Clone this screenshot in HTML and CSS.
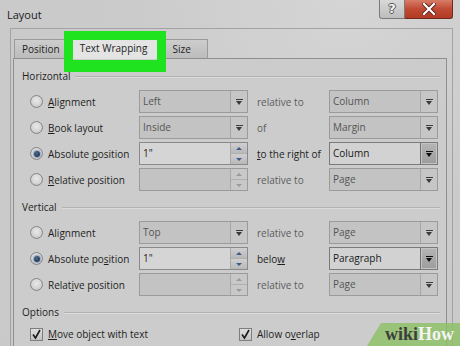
FILE: index.html
```html
<!DOCTYPE html>
<html>
<head>
<meta charset="utf-8">
<title>Layout</title>
<link rel="stylesheet" href="styles.css">
</head>
<body>
<div class="win">
  <div class="titlebar">
    <span class="title">Layout</span>
    <div class="caption">
      <div class="btn-help">?</div>
      <div class="btn-close">
        <svg width="14" height="12" viewBox="0 0 14 12"><path d="M2 1 L12 11 M12 1 L2 11" stroke="#5a2018" stroke-width="4" stroke-linecap="square"/><path d="M2 1 L12 11 M12 1 L2 11" stroke="#ffffff" stroke-width="2.2" stroke-linecap="square"/></svg>
      </div>
    </div>
  </div>

  <div class="frame">
    <div class="tabs">
      <div class="tab">Position</div>
      <div class="tab active"><span>Text Wrapping</span><div class="hl"></div></div>
      <div class="tab">Size</div>
    </div>

    <div class="panel">
      <div class="ghead">Horizontal</div>
      <div class="rows">
        <label class="opt"><span class="radio"></span><span><u>A</u>lignment</span></label>
        <div class="combo dis"><span class="val">Left</span><span class="dd"><i class="arr"></i></span></div>
        <span class="lbl dis">relative to</span>
        <div class="combo dis"><span class="val">Column</span><span class="dd"><i class="arr"></i></span></div>

        <label class="opt"><span class="radio"></span><span><u>B</u>ook layout</span></label>
        <div class="combo dis"><span class="val">Inside</span><span class="dd"><i class="arr"></i></span></div>
        <span class="lbl dis">of</span>
        <div class="combo dis"><span class="val">Margin</span><span class="dd"><i class="arr"></i></span></div>

        <label class="opt"><span class="radio on"></span><span>Absolute <u>p</u>osition</span></label>
        <div class="spin en"><span class="val">1"</span><span class="sb"><span class="up"><i class="ua"></i></span><span class="dn"><i class="da"></i></span></span></div>
        <span class="lbl"><u>t</u>o the right of</span>
        <div class="combo en"><span class="val">Column</span><span class="dd"><i class="arr"></i></span></div>

        <label class="opt"><span class="radio"></span><span><u>R</u>elative position</span></label>
        <div class="spin dis"><span class="val"></span><span class="sb"><span class="up"><i class="ua"></i></span><span class="dn"><i class="da"></i></span></span></div>
        <span class="lbl dis">relative to</span>
        <div class="combo dis"><span class="val">Page</span><span class="dd"><i class="arr"></i></span></div>
      </div>

      <div class="ghead gap">Vertical</div>
      <div class="rows">
        <label class="opt"><span class="radio"></span><span>Ali<u>g</u>nment</span></label>
        <div class="combo dis"><span class="val">Top</span><span class="dd"><i class="arr"></i></span></div>
        <span class="lbl dis">relative to</span>
        <div class="combo dis"><span class="val">Page</span><span class="dd"><i class="arr"></i></span></div>

        <label class="opt"><span class="radio on"></span><span>Absolute po<u>s</u>ition</span></label>
        <div class="spin en"><span class="val">1"</span><span class="sb"><span class="up"><i class="ua"></i></span><span class="dn"><i class="da"></i></span></span></div>
        <span class="lbl">belo<u>w</u></span>
        <div class="combo en"><span class="val">Paragraph</span><span class="dd"><i class="arr"></i></span></div>

        <label class="opt"><span class="radio"></span><span>Relat<u>i</u>ve position</span></label>
        <div class="spin dis"><span class="val"></span><span class="sb"><span class="up"><i class="ua"></i></span><span class="dn"><i class="da"></i></span></span></div>
        <span class="lbl dis">relative to</span>
        <div class="combo dis"><span class="val">Page</span><span class="dd"><i class="arr"></i></span></div>
      </div>

      <div class="ghead gap">Options</div>
      <div class="checks">
        <label class="opt"><span class="check"><svg width="11" height="11" viewBox="0 0 11 11"><path d="M2 5.5 L4.5 9 L9 1" fill="none" stroke="#1a1a1a" stroke-width="1.6"/></svg></span><span><u>M</u>ove object with text</span></label>
        <label class="opt"><span class="check"><svg width="11" height="11" viewBox="0 0 11 11"><path d="M2 5.5 L4.5 9 L9 1" fill="none" stroke="#1a1a1a" stroke-width="1.6"/></svg></span><span>Allow o<u>v</u>erlap</span></label>
      </div>
    </div>
  </div>

  <div class="wikihow"><span class="wk">wiki</span><span class="hw">How</span></div>
</div>
</body>
</html>
```

FILE: styles.css
```css
html, body {
  margin: 0;
  padding: 0;
}
body {
  width: 460px;
  height: 346px;
  overflow: hidden;
  font-family: "Open Sans", "Noto Sans", sans-serif;
  font-size: 10px;
  color: #1e1e1e;
}
.win {
  position: relative;
  width: 460px;
  height: 346px;
  overflow: hidden;
  background: radial-gradient(ellipse at 75% 0%, #d5d5d5 0%, #cbcbcb 45%, #c9c9c9 100%);
}
u {
  text-decoration: underline;
  text-underline-offset: 1px;
}

/* title bar */
.titlebar {
  height: 28px;
  display: flex;
  justify-content: space-between;
  align-items: flex-start;
  padding: 0 7px 0 7px;
  box-sizing: border-box;
}
.title {
  font-size: 11px;
  line-height: 14px;
  margin-top: 8px;
  color: #1a1a1a;
}
.caption {
  display: flex;
  height: 19px;
}
.btn-help {
  width: 24px;
  height: 18px;
  border: 1px solid #7a7a7a;
  border-top: none;
  border-radius: 0 0 0 3px;
  background: linear-gradient(#d9d9d9, #bdbdbd);
  color: #f4f4f4;
  font: bold 13px/18px "DejaVu Sans", sans-serif;
  text-align: center;
  text-shadow: 1px 0 0 #555, -1px 0 0 #555, 0 1px 0 #555, 0 -1px 0 #555;
}
.btn-close {
  width: 47px;
  height: 18px;
  border: 1px solid #6d2a1f;
  border-top: none;
  border-left: none;
  border-radius: 0 0 3px 0;
  background: linear-gradient(#d87d68, #c04a33 50%, #b23a24);
  display: flex;
  align-items: center;
  justify-content: center;
}

/* frame with tabs */
.frame {
  margin-left: 10px;
  width: 443px;
  height: 318px;
  box-sizing: border-box;
  border: 1px solid #a3a3a3;
  border-bottom: none;
  padding: 0 5px 0 2px;
}
.tabs {
  height: 29px;
  display: flex;
  align-items: flex-end;
  padding-left: 1px;
}
.tab {
  height: 19px;
  box-sizing: border-box;
  border: 1px solid #9a9a9a;
  border-bottom: none;
  background: linear-gradient(#cdcdcd, #bcbcbc);
  line-height: 18px;
  color: #1e1e1e;
  padding: 0 7px;
}
.tab:last-child {
  padding: 0 14px 0 12px;
  width: 48px;
}
.tab.active {
  position: relative;
  height: 22px;
  width: 92px;
  padding: 0;
  text-align: center;
  line-height: 21px;
  background: #e4e4e4;
  margin-bottom: -1px;
  z-index: 1;
}
.hl {
  position: absolute;
  left: -5px;
  top: -7px;
  width: 102px;
  height: 41px;
  box-sizing: border-box;
  border: 9px solid #1fe31f;
  border-bottom-width: 12px;
}

.panel {
  height: 289px;
  box-sizing: border-box;
  border: 1px solid #8f8f8f;
  border-bottom: none;
  background: #cccccc;
  padding: 9px 6px 0 8px;
}
.ghead {
  height: 16px;
  line-height: 16px;
  display: flex;
  align-items: center;
  gap: 5px;
  color: #1e1e1e;
}
.ghead::after {
  content: "";
  flex: 1;
  height: 0;
  border-top: 1px solid #b2b2b2;
  box-shadow: 0 1px 0 #dcdcdc;
}
.ghead.gap {
  margin-top: 8px;
}
.rows {
  margin: 6px 0 0 8px;
  display: grid;
  grid-template-columns: 109px 109px 81px 109px;
  grid-auto-rows: 23px;
  row-gap: 3px;
}
.rows + .ghead {
  margin-top: 8px;
}
.opt {
  display: flex;
  align-items: center;
  gap: 5px;
  white-space: nowrap;
}
.radio {
  width: 13px;
  height: 13px;
  box-sizing: border-box;
  border-radius: 50%;
  border: 1px solid #858585;
  background: radial-gradient(circle at 50% 40%, #e9e9e9 0%, #d4d4d4 55%, #b9b9b9 100%);
  display: flex;
  align-items: center;
  justify-content: center;
}
.radio.on::after {
  content: "";
  width: 6px;
  height: 6px;
  border-radius: 50%;
  background: radial-gradient(circle at 40% 35%, #4c6a90, #14243a);
  box-shadow: 0 0 1px 1px #8fa6c2;
}
.lbl {
  display: flex;
  align-items: center;
  padding-left: 9px;
  white-space: nowrap;
  color: #1e1e1e;
}
.lbl.dis {
  color: #5c5c5c;
}

/* combo boxes */
.combo, .spin {
  display: flex;
  box-sizing: border-box;
  border: 1px solid #9b9b9b;
  background: #c3c3c3;
}
.val {
  flex: 1;
  padding-left: 3px;
  line-height: 21px;
  color: #555;
  white-space: nowrap;
}
.dd {
  width: 16px;
  border-left: 1px solid #a7a7a7;
  background: #c6c6c6;
  display: flex;
  align-items: center;
  justify-content: center;
}
.arr {
  width: 0;
  height: 0;
  border-left: 3.5px solid transparent;
  border-right: 3.5px solid transparent;
  border-top: 4px solid #3a3a3a;
  position: relative;
  top: 1px;
}
.arr::before {
  content: "";
  position: absolute;
  left: -3.5px;
  top: -6px;
  width: 7px;
  height: 1px;
  background: #3a3a3a;
}
.combo.en {
  border-color: #7a7a7a;
  background: #d2d2d2;
}
.combo.en .val, .spin.en .val {
  color: #1a1a1a;
}
.combo.en .dd {
  background: linear-gradient(#b5b5b5, #9c9c9c);
  border-left: 1px solid #707070;
  box-shadow: inset 0 0 0 1px #c4c4c4;
}
.combo.en .arr {
  border-top-color: #0e0e0e;
}
.combo.en .arr::before {
  background: #0e0e0e;
}

/* spinners */
.spin.en {
  border-color: #8a8a8a;
  background: #d5d5d5;
}
.sb {
  width: 16px;
  display: flex;
  flex-direction: column;
  border-left: 1px solid #a9a9a9;
}
.sb .up, .sb .dn {
  flex: 1;
  display: flex;
  align-items: center;
  justify-content: center;
  background: #c8c8c8;
}
.sb .up {
  border-bottom: 1px solid #b0b0b0;
}
.spin.en .sb .up, .spin.en .sb .dn {
  background: linear-gradient(#d0d0d0, #b8b8b8);
}
.ua, .da {
  width: 0;
  height: 0;
  border-left: 3px solid transparent;
  border-right: 3px solid transparent;
}
.ua {
  border-bottom: 3px solid #9a9a9a;
}
.da {
  border-top: 3px solid #9a9a9a;
}
.spin.en .ua {
  border-bottom-color: #3c5c8a;
}
.spin.en .da {
  border-top-color: #3c5c8a;
}

/* checkboxes */
.checks {
  margin: 4px 0 0 8px;
  display: grid;
  grid-template-columns: 209px auto;
  height: 20px;
}
.check {
  width: 13px;
  height: 13px;
  box-sizing: border-box;
  border: 1px solid #7e7e7e;
  background: linear-gradient(#dedede, #c2c2c2);
  display: flex;
  align-items: center;
  justify-content: center;
}

/* watermark overlay */
.wikihow {
  position: absolute;
  right: 0;
  bottom: 0;
  width: 93px;
  height: 23px;
  box-sizing: border-box;
  padding-left: 18px;
  background: rgba(138, 192, 98, 0.78);
  clip-path: polygon(15% 0, 100% 0, 100% 100%, 0 100%);
  font: bold 18px/23px "Liberation Serif", serif;
  white-space: nowrap;
}
.wk {
  color: #3e3e3e;
}
.hw {
  color: #f4f4f4;
}
```
